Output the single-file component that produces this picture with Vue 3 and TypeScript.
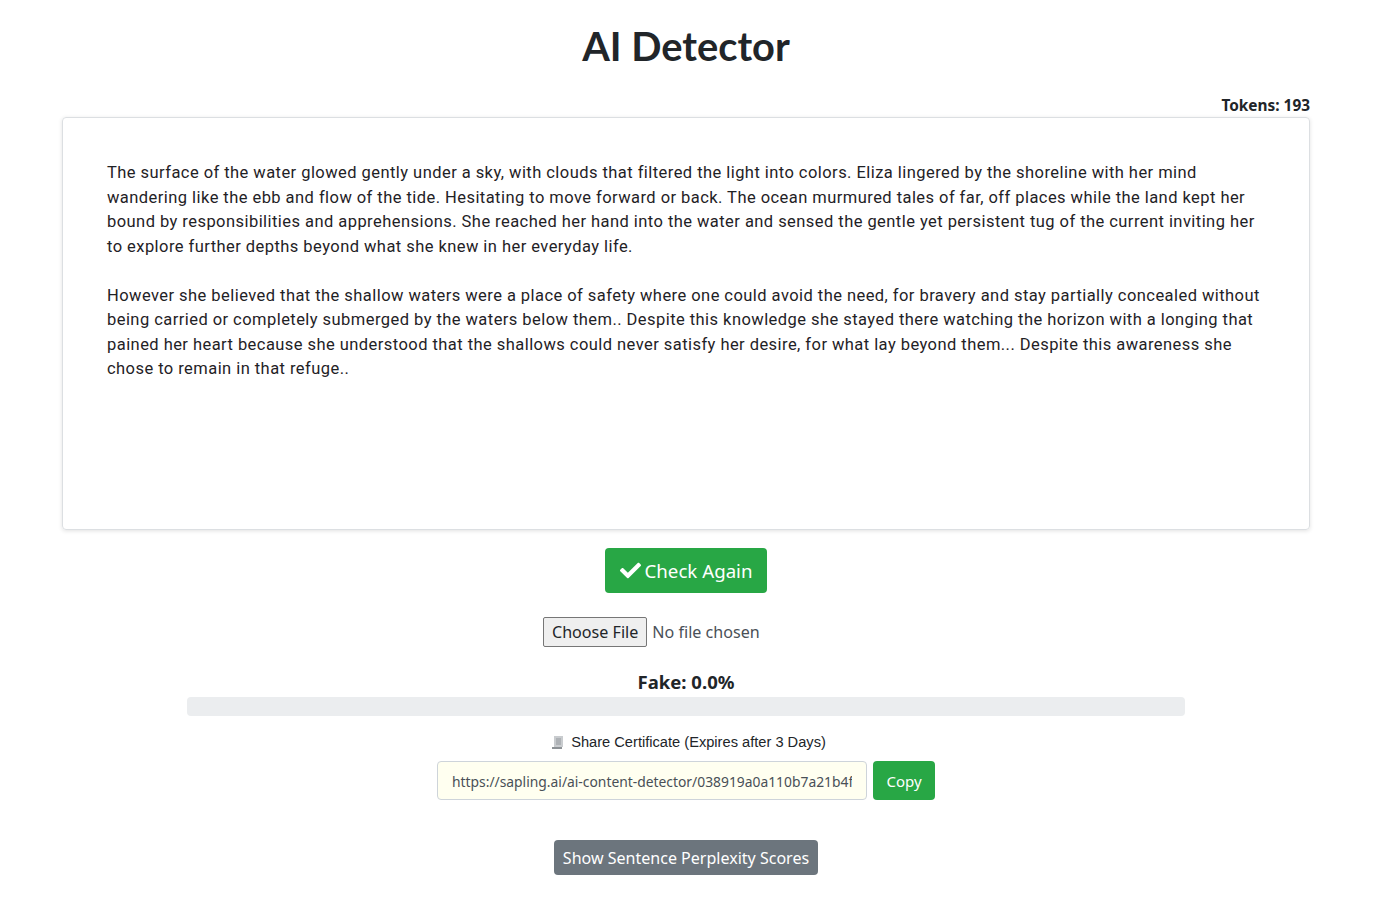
<script setup lang="ts">
const paragraphs: string[] = [
  "The surface of the water glowed gently under a sky, with clouds that filtered the light into colors. Eliza lingered by the shoreline with her mind wandering like the ebb and flow of the tide. Hesitating to move forward or back. The ocean murmured tales of far, off places while the land kept her bound by responsibilities and apprehensions. She reached her hand into the water and sensed the gentle yet persistent tug of the current inviting her to explore further depths beyond what she knew in her everyday life.",
  "However she believed that the shallow waters were a place of safety where one could avoid the need, for bravery and stay partially concealed without being carried or completely submerged by the waters below them.. Despite this knowledge she stayed there watching the horizon with a longing that pained her heart because she understood that the shallows could never satisfy her desire, for what lay beyond them... Despite this awareness she chose to remain in that refuge..",
];
const fake = 0;
const shareUrl = "https://sapling.ai/ai-content-detector/038919a0a110b7a21b4f";
</script>

<template>
  <div class="page">
    <h1 class="title">AI Detector</h1>
    <div class="tokens">Tokens: 193</div>
    <div class="editor">
      <p v-for="(p, i) in paragraphs" :key="i">{{ p }}</p>
    </div>
    <button class="btn btn-check">
      <svg class="check" viewBox="0 0 512 512" width="21" height="21">
        <path fill="#fff" d="M173.9 439.4l-166.4-166.4c-10-10-10-26.2 0-36.2l36.2-36.2c10-10 26.2-10 36.2 0L192 312.7 432.1 72.6c10-10 26.2-10 36.2 0l36.2 36.2c10 10 10 26.2 0 36.2l-294.4 294.4c-10 10-26.2 10-36.2 0z" />
      </svg>
      Check Again
    </button>
    <input class="file" type="file" />
    <div class="fake-label">Fake: {{ fake.toFixed(1) }}%</div>
    <div class="progress"><div class="progress-bar" :style="{ width: fake + '%' }"></div></div>
    <div class="share">
      <svg class="scroll" viewBox="0 0 14 14" width="14" height="14">
        <rect x="3" y="0" width="9" height="11" fill="#c9cccf" />
        <rect x="5" y="2" width="5" height="7" fill="#aeb2b6" />
        <rect x="1" y="11" width="10" height="2" fill="#8d9296" />
      </svg>
      <span>Share Certificate (Expires after 3 Days)</span>
    </div>
    <div class="copy-row">
      <input class="url" readonly :value="shareUrl" />
      <button class="btn btn-copy">Copy</button>
    </div>
    <button class="btn btn-perplexity">Show Sentence Perplexity Scores</button>
  </div>
</template>

<style scoped>
.page {
  display: flex;
  flex-direction: column;
  align-items: center;
  padding: 0 77px 0 62px;
  font-family: Roboto, "Liberation Sans", sans-serif;
  color: #212529;
}
.title {
  margin: 20px 0 0;
  font-family: Lato, "Open Sans", sans-serif;
  font-size: 39.8px;
  line-height: 52px;
  font-weight: 700;
}
.tokens {
  align-self: flex-end;
  margin: 24px 0 1px;
  font-family: "Noto Sans", sans-serif;
  font-size: 15.4px;
  font-weight: 700;
  line-height: 20px;
}
.editor {
  box-sizing: border-box;
  width: 100%;
  height: 413px;
  padding: 43px 44px;
  border: 1px solid #dcdfe2;
  border-radius: 4px;
  box-shadow: 0 1px 4px rgba(0, 0, 0, 0.12);
  font-size: 16.5px;
  line-height: 24.5px;
  color: #1f2226;
  letter-spacing: 0.445px;
}
.editor p {
  margin: 0 0 24.5px;
}
.btn {
  border: none;
  color: #fff;
  font-family: "Noto Sans", sans-serif;
}
.btn-check {
  display: flex;
  align-items: center;
  gap: 4px;
  margin-top: 18px;
  height: 45px;
  padding: 0 14.5px;
  background: #28a745;
  border-radius: 4px;
  font-size: 18.7px;
}
.file {
  box-sizing: border-box;
  width: 286px;
  height: 31px;
  margin: 24px 0 0;
  font-family: "Noto Sans", sans-serif;
  font-size: 16.1px;
  color: #495057;
}
.file::file-selector-button {
  height: 30px;
  padding: 0 8px;
  margin-right: 5px;
  font: inherit;
  color: #212529;
  background: #efefef;
  border: 1px solid #767676;
  border-radius: 2px;
}
.fake-label {
  margin-top: 19px;
  font-family: "Noto Sans", sans-serif;
  font-size: 18.5px;
  font-weight: 700;
  line-height: 30px;
}
.progress {
  width: 998px;
  height: 19px;
  background: #ebedef;
  border-radius: 4px;
}
.progress-bar {
  height: 100%;
  background: #28a745;
}
.share {
  display: flex;
  align-items: center;
  gap: 6px;
  margin-top: 17px;
  padding-left: 5px;
  font-family: "Liberation Sans", Arial, sans-serif;
  font-size: 14.65px;
  line-height: 19px;
}
.copy-row {
  display: flex;
  gap: 6px;
  margin-top: 9px;
}
.url {
  box-sizing: border-box;
  width: 430px;
  height: 39px;
  padding: 1px 14px 0;
  background: #fffff0;
  border: 1px solid #ced4da;
  border-radius: 4px;
  font-family: "Noto Sans", sans-serif;
  font-size: 13.85px;
  color: #495057;
}
.btn-copy {
  width: 62px;
  height: 39px;
  background: #28a745;
  border-radius: 4px;
  font-size: 15px;
}
.btn-perplexity {
  margin-top: 40px;
  height: 35px;
  padding: 0 9px;
  background: #6c757d;
  border-radius: 4px;
  font-size: 16.05px;
}
</style>

<style>
html, body {
  background: #fff;
}
</style>
